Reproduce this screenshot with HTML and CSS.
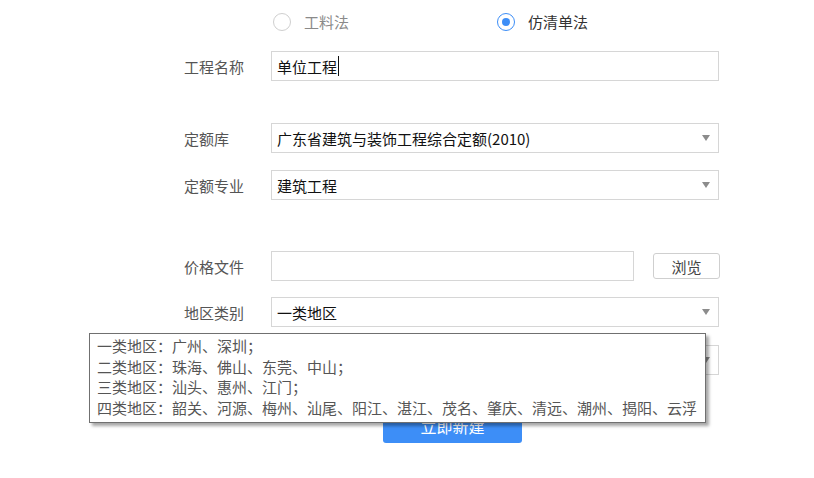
FILE: index.html
```html
<!DOCTYPE html>
<html lang="zh">
<head>
<meta charset="utf-8">
<link rel="stylesheet" href="styles.css">
</head>
<body>
<div class="page">
  <div class="radios">
    <label class="radio"><span class="circle"></span><span class="rtext muted">工料法</span></label>
    <label class="radio checked"><span class="circle"><span class="dot"></span></span><span class="rtext">仿清单法</span></label>
  </div>
  <div class="form">
    <div class="row r1">
      <span class="label">工程名称</span>
      <div class="field input"><span class="value">单位工程</span><span class="caret"></span></div>
    </div>
    <div class="row r2">
      <span class="label">定额库</span>
      <div class="field select"><span class="value">广东省建筑与装饰工程综合定额(2010)</span><span class="arrow"></span></div>
    </div>
    <div class="row r3">
      <span class="label">定额专业</span>
      <div class="field select"><span class="value">建筑工程</span><span class="arrow"></span></div>
    </div>
    <div class="row r4">
      <span class="label">价格文件</span>
      <div class="field input short"></div>
      <button class="browse">浏览</button>
    </div>
    <div class="row r5">
      <span class="label">地区类别</span>
      <div class="field select"><span class="value">一类地区</span><span class="arrow"></span></div>
    </div>
    <div class="row r6">
      <span class="label"></span>
      <div class="field select"><span class="value"></span><span class="arrow"></span></div>
    </div>
    <div class="actions">
      <button class="submit">立即新建</button>
    </div>
  </div>
  <div class="tooltip">
    <div>一类地区：广州、深圳；</div>
    <div>二类地区：珠海、佛山、东莞、中山；</div>
    <div>三类地区：汕头、惠州、江门；</div>
    <div>四类地区：韶关、河源、梅州、汕尾、阳江、湛江、茂名、肇庆、清远、潮州、揭阳、云浮</div>
  </div>
</div>
</body>
</html>
```
FILE: styles.css
```css
html, body {
  margin: 0;
  padding: 0;
  background: #fff;
}
body {
  font-family: "Noto Sans CJK SC", "Noto Sans", sans-serif;
  font-size: 15px;
  color: #333;
}
.page {
  position: relative;
  width: 814px;
  height: 478px;
  overflow: hidden;
}
.radios {
  height: 44px;
  display: flex;
  align-items: center;
  padding-left: 273px;
}
.radio {
  display: flex;
  align-items: center;
  gap: 13px;
}
.radio + .radio {
  margin-left: 148px;
}
.circle {
  box-sizing: border-box;
  width: 18px;
  height: 18px;
  border-radius: 50%;
  border: 1px solid #cfcfcf;
  display: flex;
  align-items: center;
  justify-content: center;
}
.radio.checked .circle {
  border-color: #3d8ef7;
}
.dot {
  width: 8px;
  height: 8px;
  border-radius: 50%;
  background: #3d8ef7;
}
.rtext {
  line-height: 18px;
  color: #333;
}
.rtext.muted {
  color: #8a8a8a;
}
.form {
  padding-left: 184px;
}
.row {
  display: flex;
  align-items: center;
  height: 30px;
}
.r1 { margin-top: 7px; }
.r2 { margin-top: 42px; }
.r3 { margin-top: 17px; }
.r4 { margin-top: 51px; }
.r5 { margin-top: 16px; }
.r6 { margin-top: 18px; }
.label {
  width: 87px;
  color: #555;
  font-size: 15px;
}
.field {
  box-sizing: border-box;
  width: 448px;
  height: 30px;
  border: 1px solid #d6d6d6;
  display: flex;
  align-items: center;
  padding-left: 5px;
  padding-right: 8px;
  background: #fff;
}
.field.short {
  width: 363px;
}
.value {
  color: #111;
  font-size: 15px;
  flex: none;
}
.caret {
  width: 1px;
  height: 20px;
  background: #111;
  margin-left: 1px;
}
.arrow {
  margin-left: auto;
  width: 0;
  height: 0;
  border-left: 4px solid transparent;
  border-right: 4px solid transparent;
  border-top: 6px solid #8c8c8c;
}
.browse {
  box-sizing: border-box;
  margin-left: 19px;
  width: 67px;
  height: 26px;
  border: 1px solid #cfcfcf;
  border-radius: 3px;
  background: #fff;
  font-family: inherit;
  font-size: 15px;
  color: #444;
  padding: 0;
}
.actions {
  margin-top: 34px;
  padding-left: 199px;
}
.submit {
  width: 139px;
  height: 34px;
  border: none;
  border-radius: 3px;
  background: #3d8ef7;
  color: #fff;
  font-family: inherit;
  font-size: 16px;
  padding: 0;
}
.tooltip {
  position: absolute;
  left: 89px;
  top: 333px;
  box-sizing: border-box;
  width: 617px;
  height: 90px;
  border: 1px solid #707070;
  background: #fff;
  box-shadow: 3px 3px 3px rgba(0, 0, 0, 0.35);
  padding: 2px 0 0 7px;
  color: #555;
  font-size: 15px;
  line-height: 20.7px;
  white-space: nowrap;
}
```
